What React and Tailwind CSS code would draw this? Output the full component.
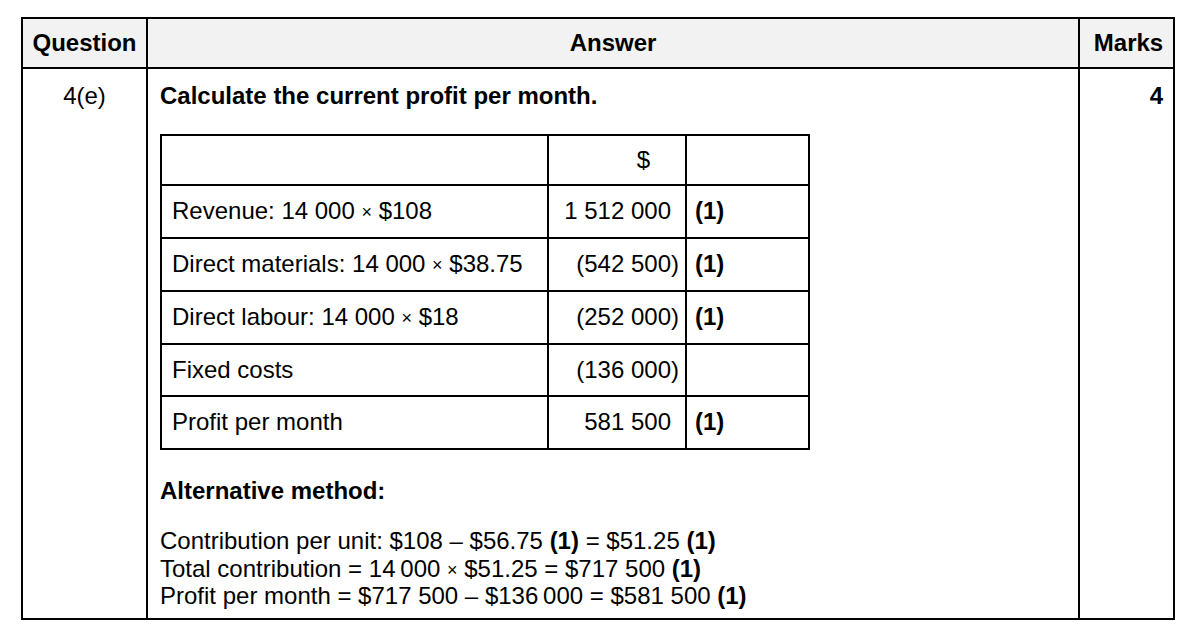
import React from "react";

const X = () => <span className="text-[18px] align-[1px]">×</span>;

const rows = [
  { label: <>Revenue: 14 000 <X /> $108</>, value: "1 512 000", paren: false, mark: "(1)", h: "h-[53px]" },
  { label: <>Direct materials: 14 000 <X /> $38.75</>, value: "(542 500)", paren: true, mark: "(1)", h: "h-[53px]" },
  { label: <>Direct labour: 14 000 <X /> $18</>, value: "(252 000)", paren: true, mark: "(1)", h: "h-[53px]" },
  { label: "Fixed costs", value: "(136 000)", paren: true, mark: "", h: "h-[52px]" },
  { label: "Profit per month", value: "581 500", paren: false, mark: "(1)", h: "h-[51px]", last: true },
];

export default function App() {
  return (
    <div
      className="w-[1194px] h-[637px] bg-white text-black overflow-hidden"
      style={{ fontFamily: '"Liberation Sans", Arial, sans-serif' }}
    >
      <div className="ml-[21px] mt-[17px] w-[1154px] border-2 border-black text-[24px] leading-[1.15]">
        {/* header */}
        <div className="flex h-[50px] bg-[#f2f2f2] border-b-2 border-black font-bold">
          <div className="w-[125px] border-r-2 border-black flex items-center justify-center">Question</div>
          <div className="w-[932px] border-r-2 border-black flex items-center justify-center">Answer</div>
          <div className="w-[93px] flex items-center justify-center pl-[4px]">Marks</div>
        </div>
        {/* body */}
        <div className="flex h-[549px]">
          <div className="w-[125px] border-r-2 border-black pt-[13px] text-center">4(e)</div>
          <div className="w-[932px] border-r-2 border-black pt-[13px] pl-[12px]">
            <div className="font-bold">Calculate the current profit per month.</div>
            <div className="mt-[24px] w-[650px] border-2 border-black">
              <div className="flex h-[50px] border-b-2 border-black">
                <div className="w-[387px] border-r-2 border-black"></div>
                <div className="w-[138px] border-r-2 border-black flex items-center justify-end pr-[35px]">$</div>
                <div className="flex-1"></div>
              </div>
              {rows.map((r, i) => (
                <div
                  key={i}
                  className={`flex ${r.h} ${r.last ? "" : "border-b-2 border-black"}`}
                >
                  <div className="w-[387px] border-r-2 border-black flex items-center pl-[10px] whitespace-nowrap">
                    <span>{r.label}</span>
                  </div>
                  <div className="w-[138px] border-r-2 border-black flex items-center justify-end pr-[6px] whitespace-nowrap">
                    <span>
                      {r.value}
                      {!r.paren && <span className="invisible">)</span>}
                    </span>
                  </div>
                  <div className="flex-1 flex items-center pl-[8px] font-bold">{r.mark}</div>
                </div>
              ))}
            </div>
            <div className="mt-[27px] font-bold">Alternative method:</div>
            <div className="mt-[23px]">
              <div>
                Contribution per unit: $108 – $56.75 <b>(1)</b> = $51.25 <b>(1)</b>
              </div>
              <div>
                Total contribution = 14{"\u2009"}000 <X /> $51.25 = $717 500 <b>(1)</b>
              </div>
              <div>
                Profit per month = $717 500 – $136{"\u2009"}000 = $581 500 <b>(1)</b>
              </div>
            </div>
          </div>
          <div className="w-[93px] pt-[13px] pr-[10px] text-right font-bold">4</div>
        </div>
      </div>
    </div>
  );
}
